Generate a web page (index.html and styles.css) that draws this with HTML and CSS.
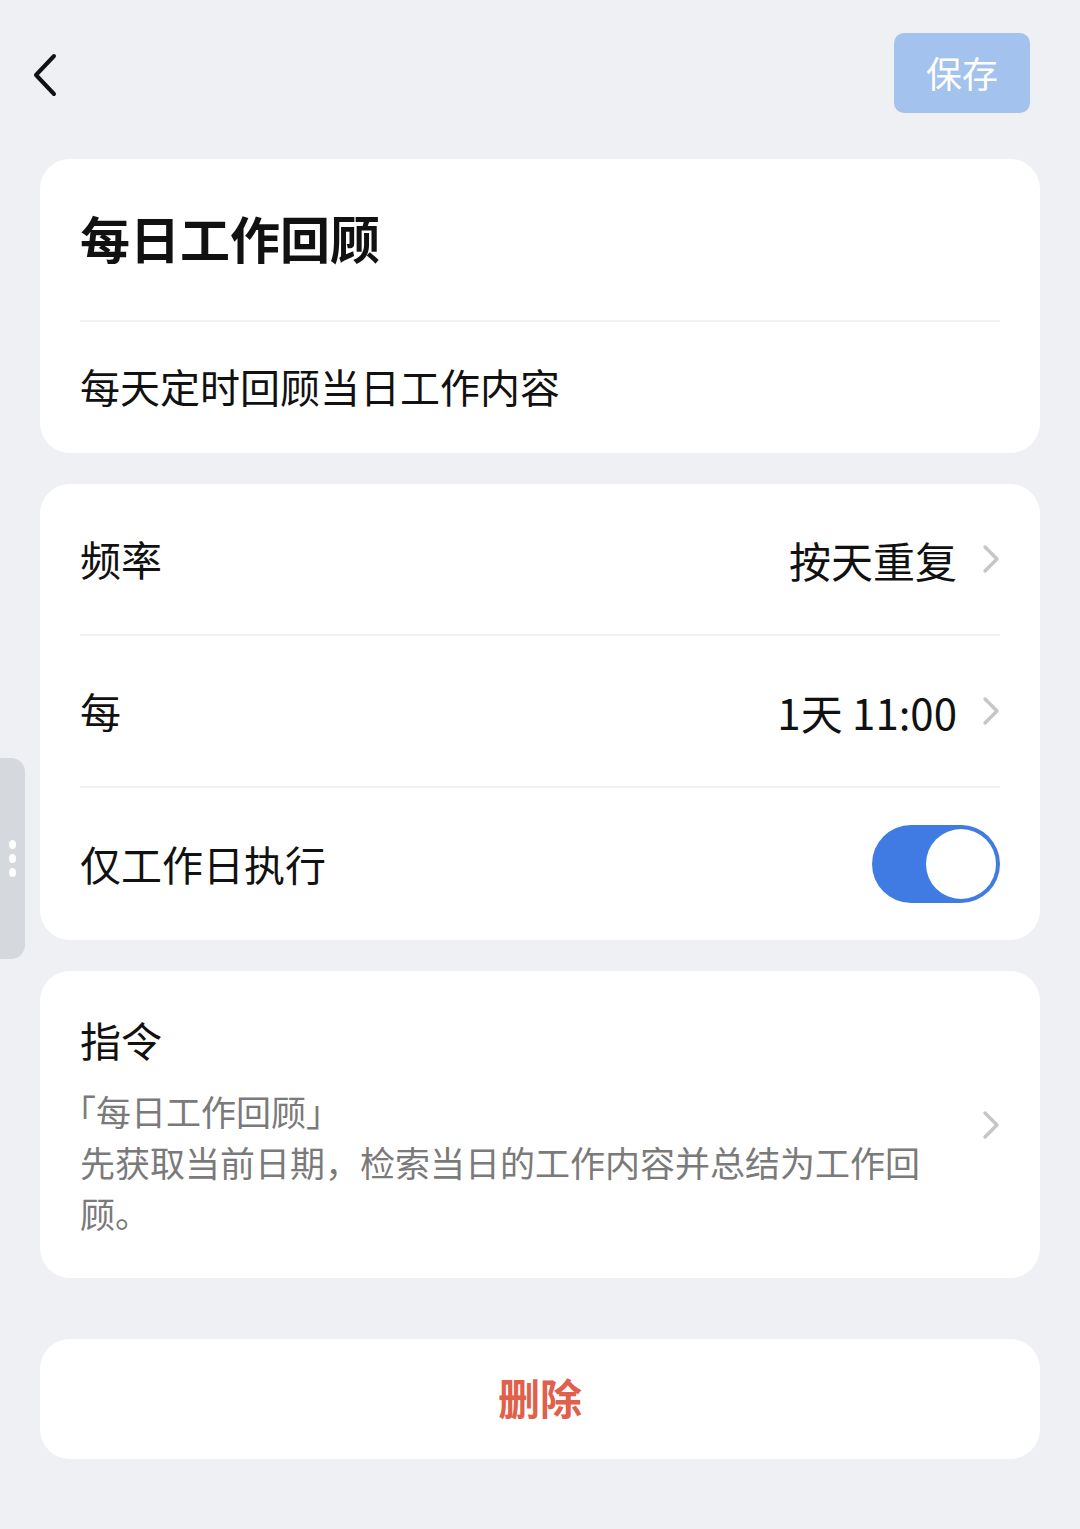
FILE: index.html
```html
<!DOCTYPE html>
<html lang="zh-CN">
<head>
    <meta charset="UTF-8">
    <meta name="viewport" content="width=device-width, initial-scale=1.0">
    <title>每日工作回顾</title>
    <link rel="stylesheet" href="styles.css">
</head>
<body>
    <div class="side-handle">
        <span class="dot"></span>
        <span class="dot"></span>
        <span class="dot"></span>
    </div>

    <header class="top-bar">
        <button class="back-btn" aria-label="返回">
            <svg width="30" height="44" viewBox="0 0 30 44">
                <polyline points="24,3 6,22 24,41" fill="none" stroke="#111" stroke-width="4" stroke-linecap="round" stroke-linejoin="round"/>
            </svg>
        </button>
        <button class="save-btn">保存</button>
    </header>

    <section class="card">
        <div class="task-title">每日工作回顾</div>
        <div class="divider"></div>
        <div class="task-desc">每天定时回顾当日工作内容</div>
    </section>

    <section class="card">
        <div class="row">
            <span class="label">频率</span>
            <span class="value">按天重复
                <svg class="chevron" width="18" height="30" viewBox="0 0 18 30">
                    <polyline points="3,3 15,15 3,27" fill="none" stroke="#c6c6c8" stroke-width="3.5" stroke-linecap="round" stroke-linejoin="round"/>
                </svg>
            </span>
        </div>
        <div class="divider"></div>
        <div class="row">
            <span class="label">每</span>
            <span class="value">1天 11:00
                <svg class="chevron" width="18" height="30" viewBox="0 0 18 30">
                    <polyline points="3,3 15,15 3,27" fill="none" stroke="#c6c6c8" stroke-width="3.5" stroke-linecap="round" stroke-linejoin="round"/>
                </svg>
            </span>
        </div>
        <div class="divider"></div>
        <div class="row row-last">
            <span class="label">仅工作日执行</span>
            <div class="toggle on"><span class="knob"></span></div>
        </div>
    </section>

    <section class="card command">
        <div class="command-main">
            <div class="label">指令</div>
            <div class="command-text">
                <div><span class="br-open">「</span>每日工作回顾<span class="br-close">」</span></div>
                <div>先获取当前日期，检索当日的工作内容并总结为工作回顾。</div>
            </div>
        </div>
        <svg class="chevron" width="18" height="30" viewBox="0 0 18 30">
            <polyline points="3,3 15,15 3,27" fill="none" stroke="#c6c6c8" stroke-width="3.5" stroke-linecap="round" stroke-linejoin="round"/>
        </svg>
    </section>

    <section class="card delete-card">
        <button class="delete-btn">删除</button>
    </section>
</body>
</html>
```

FILE: styles.css
```css
body {
    font-family: "Noto Sans CJK SC", "Noto Sans", sans-serif;
    background-color: #eff0f4;
    margin: 0;
    padding: 0 40px 70px;
    color: #111;
}

button {
    font-family: inherit;
    border: none;
    cursor: pointer;
}

.top-bar {
    height: 159px;
    display: flex;
    justify-content: space-between;
    align-items: flex-start;
}
.back-btn {
    background: none;
    padding: 0;
    margin-top: 53px;
    margin-left: -10px;
    width: 30px;
    height: 44px;
}
.back-btn svg { display: block; }
.save-btn {
    margin-top: 33px;
    margin-right: 10px;
    width: 136px;
    height: 80px;
    background-color: #a3c2ee;
    color: #fff;
    font-size: 36px;
    border-radius: 10px;
    padding: 0 0 3px;
}

.card {
    background: #fff;
    border-radius: 30px;
    padding: 0 40px;
    margin-bottom: 31px;
}

.divider {
    height: 2px;
    background: #f0f1f3;
}

.task-title {
    height: 161px;
    display: flex;
    align-items: center;
    font-size: 50px;
    font-weight: bold;
    padding-bottom: 6px;
    box-sizing: border-box;
}
.task-desc {
    height: 131px;
    display: flex;
    align-items: center;
    font-size: 40px;
    padding-bottom: 3px;
    box-sizing: border-box;
}

.row {
    height: 150px;
    display: flex;
    align-items: center;
    justify-content: space-between;
}
.row-last { height: 152px; }
.label {
    font-size: 41px;
}
.row .label { padding-bottom: 2px; }
.value {
    display: flex;
    align-items: center;
    font-size: 42px;
}
.chevron {
    display: block;
    margin-left: 25px;
    flex-shrink: 0;
}

.toggle {
    position: relative;
    width: 128px;
    height: 78px;
    border-radius: 39px;
    background: #3f7be3;
}
.toggle .knob {
    position: absolute;
    top: 4px;
    right: 4px;
    width: 70px;
    height: 70px;
    border-radius: 50%;
    background: #fff;
}

.command {
    display: flex;
    align-items: center;
    justify-content: space-between;
    padding-top: 40px;
    padding-bottom: 40px;
    margin-bottom: 61px;
}
.command .label {
    line-height: 56px;
}
.command-text {
    margin-top: 18px;
    width: 860px;
    font-size: 35px;
    line-height: 51px;
    color: #7a7a7a;
}
.br-open { margin-left: -19px; }
.br-close { margin-right: -19px; }

.delete-card {
    height: 120px;
    display: flex;
    align-items: center;
    justify-content: center;
}
.delete-btn {
    background: none;
    color: #e0604c;
    font-size: 42px;
    font-weight: bold;
    padding: 0 0 6px;
}

.side-handle {
    position: absolute;
    left: 0;
    top: 758px;
    width: 25px;
    height: 201px;
    background: #d5d8dc;
    border-radius: 0 14px 14px 0;
    display: flex;
    flex-direction: column;
    align-items: center;
    justify-content: center;
    gap: 5px;
}
.side-handle .dot {
    width: 7px;
    height: 9px;
    border-radius: 50%;
    background: #fff;
}
```
